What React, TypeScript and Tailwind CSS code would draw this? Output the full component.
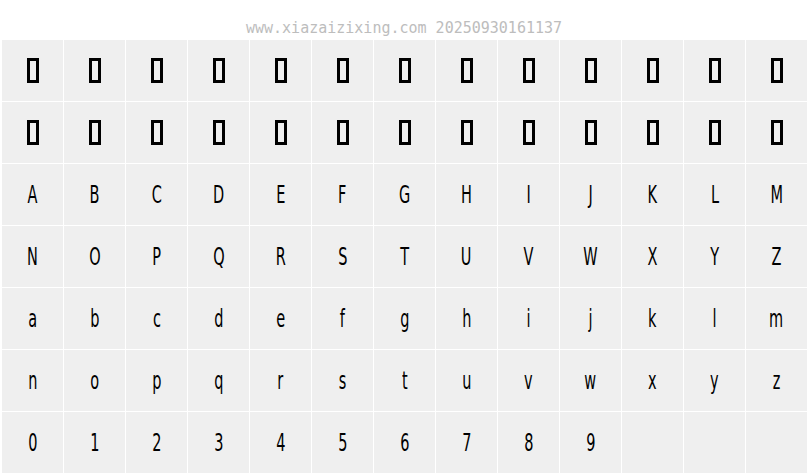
import React from "react";

const upper = "ABCDEFGHIJKLMNOPQRSTUVWXYZ".split("");
const lower = "abcdefghijklmnopqrstuvwxyz".split("");
const digits = "0123456789".split("");

type Cell = { kind: "box" } | { kind: "char"; ch: string } | { kind: "empty" };

const cells: Cell[] = [
  ...Array.from({ length: 26 }, () => ({ kind: "box" } as Cell)),
  ...upper.map(ch => ({ kind: "char", ch } as Cell)),
  ...lower.map(ch => ({ kind: "char", ch } as Cell)),
  ...digits.map(ch => ({ kind: "char", ch } as Cell)),
  ...Array.from({ length: 3 }, () => ({ kind: "empty" } as Cell)),
];

export default function App() {
  return <div className="w-[808px] h-[476px] bg-white overflow-hidden">
      <div className="h-[40px] flex items-center justify-center pt-[16px]">
        <span className="text-[15px] leading-none text-[#bdbdbd]" style={{ fontFamily: '"DejaVu Sans Mono", "Liberation Mono", monospace' }}>
          www.xiazaizixing.com 20250930161137
        </span>
      </div>
      <div className="ml-[2px] grid grid-cols-[repeat(13,61px)] auto-rows-[61px] gap-[1px]">
        {cells.map((c, i) => <div key={i} className="bg-[#efefef] flex items-center justify-center">
            {c.kind === "box" && <div className="w-[12px] h-[25px] border-[3px] border-black" />}
            {c.kind === "char" && <span className="text-[25px] leading-none text-black inline-block scale-x-[0.58]" style={{ fontFamily: '"DejaVu Sans", "Liberation Sans", sans-serif' }}>
                {c.ch}
              </span>}
          </div>)}
      </div>
    </div>;
}
